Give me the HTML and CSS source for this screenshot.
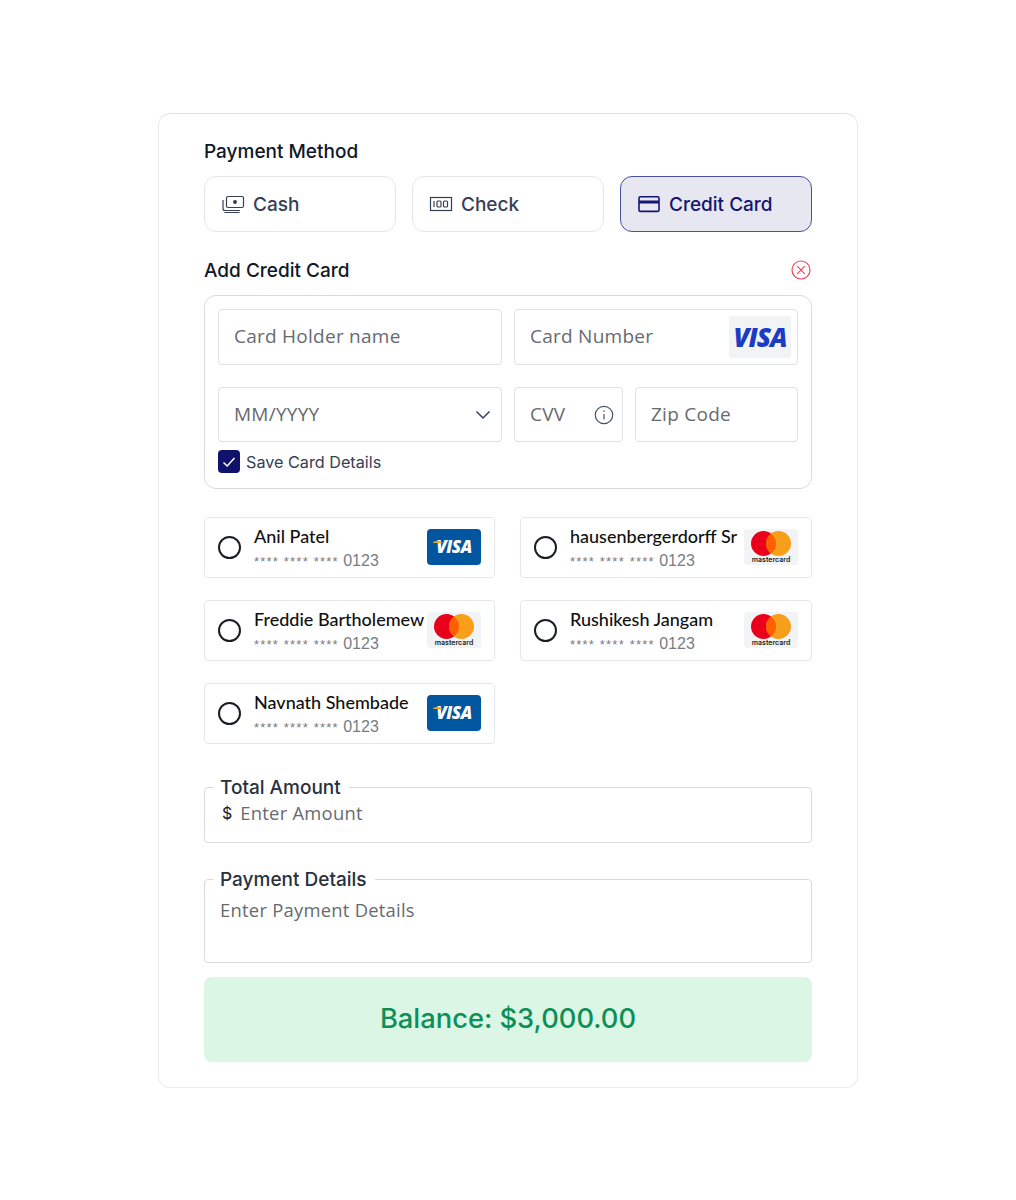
FILE: index.html
```html
<!DOCTYPE html>
<html lang="en">
<head>
    <meta charset="UTF-8">
    <meta name="viewport" content="width=device-width, initial-scale=1.0">
    <title>Payment Method</title>
    <link rel="stylesheet" href="styles.css">
</head>
<body>
    <main class="panel">
        <h2 class="title">Payment Method</h2>
        <div class="methods">
            <button type="button" class="method">
                <svg width="24" height="24" viewBox="0 0 24 24" fill="none" stroke="currentColor" stroke-width="1.2">
                    <rect x="5.5" y="4.5" width="17" height="11" rx="1.5"/>
                    <circle cx="14" cy="10" r="2" fill="currentColor" stroke="none"/>
                    <path d="M2 8v8.5a2 2 0 0 0 2 2h15"/>
                    <path d="M3.5 20.5h15" stroke-width="1"/>
                </svg>
                Cash
            </button>
            <button type="button" class="method">
                <svg width="24" height="24" viewBox="0 0 24 24" fill="none" stroke="currentColor" stroke-width="1.2">
                    <rect x="1.5" y="5.5" width="21" height="13"/>
                    <path d="M5 9v6"/>
                    <rect x="8" y="9" width="4" height="6" rx="1"/>
                    <rect x="14.5" y="9" width="4" height="6" rx="1"/>
                </svg>
                Check
            </button>
            <button type="button" class="method active">
                <svg width="24" height="24" viewBox="0 0 24 24" fill="none" stroke="currentColor" stroke-width="1.6">
                    <rect x="2" y="4.8" width="20" height="14.6" rx="1.5"/>
                    <path d="M2 10h20" stroke-width="3"/>
                </svg>
                Credit Card
            </button>
        </div>

        <div class="add-head">
            <h2 class="title">Add Credit Card</h2>
            <svg class="close-icon" width="20" height="20" viewBox="0 0 20 20" fill="none" stroke="#f0455a" stroke-width="1.2">
                <circle cx="10" cy="10" r="9"/>
                <path d="M6.2 6.2l7.6 7.6M13.8 6.2l-7.6 7.6"/>
            </svg>
        </div>

        <!-- New card form -->
        <form class="card-form">
            <div class="row-top">
                <div class="field"><input type="text" placeholder="Card Holder name"></div>
                <div class="field">
                    <input type="text" placeholder="Card Number">
                    <span class="visa-light">VISA</span>
                </div>
            </div>
            <div class="row-bottom">
                <div class="field">
                    <input type="text" placeholder="MM/YYYY">
                    <svg class="chevron" width="16" height="10" viewBox="0 0 16 10" fill="none" stroke="#344054" stroke-width="1.5">
                        <path d="M1.5 1.5L8 8l6.500-6.500"/>
                    </svg>
                </div>
                <div class="field">
                    <input type="text" placeholder="CVV">
                    <svg class="info" width="20" height="20" viewBox="0 0 20 20" fill="none" stroke="#475467" stroke-width="1.200">
                        <circle cx="10" cy="10" r="8.700"/>
                        <path d="M10 9v5.500M10 5.500v1.400"/>
                    </svg>
                </div>
                <div class="field"><input type="text" placeholder="Zip Code"></div>
            </div>
            <label class="save">
                <span class="check">
                    <svg width="14" height="12" viewBox="0 0 14 12" fill="none" stroke="#fff" stroke-width="1.500">
                        <path d="M1.500 6.500L5.200 10l7.300-8"/>
                    </svg>
                </span>
                Save Card Details
            </label>
        </form>

        <!-- Saved cards -->
        <div class="saved">
            <div class="saved-card">
                <span class="radio"></span>
                <div class="saved-info">
                    <div class="saved-name">Anil Patel</div>
                    <div class="saved-num"><span>**** **** ****</span> 0123</div>
                </div>
                <span class="logo visa"><i></i>VISA</span>
            </div>
            <div class="saved-card">
                <span class="radio"></span>
                <div class="saved-info">
                    <div class="saved-name">hausenbergerdorff Sr</div>
                    <div class="saved-num"><span>**** **** ****</span> 0123</div>
                </div>
                <span class="logo master"><b class="red"></b><b class="orange"></b><em>mastercard</em></span>
            </div>
            <div class="saved-card">
                <span class="radio"></span>
                <div class="saved-info">
                    <div class="saved-name">Freddie Bartholemew</div>
                    <div class="saved-num"><span>**** **** ****</span> 0123</div>
                </div>
                <span class="logo master"><b class="red"></b><b class="orange"></b><em>mastercard</em></span>
            </div>
            <div class="saved-card">
                <span class="radio"></span>
                <div class="saved-info">
                    <div class="saved-name">Rushikesh Jangam</div>
                    <div class="saved-num"><span>**** **** ****</span> 0123</div>
                </div>
                <span class="logo master"><b class="red"></b><b class="orange"></b><em>mastercard</em></span>
            </div>
            <div class="saved-card">
                <span class="radio"></span>
                <div class="saved-info">
                    <div class="saved-name">Navnath Shembade</div>
                    <div class="saved-num"><span>**** **** ****</span> 0123</div>
                </div>
                <span class="logo visa"><i></i>VISA</span>
            </div>
        </div>

        <fieldset class="amount">
            <legend>Total Amount</legend>
            <span class="dollar">$</span>
            <input type="text" placeholder="Enter Amount">
        </fieldset>

        <fieldset class="details">
            <legend>Payment Details</legend>
            <textarea placeholder="Enter Payment Details"></textarea>
        </fieldset>

        <div class="balance">Balance: $3,000.00</div>
    </main>
</body>
</html>
```

FILE: styles.css
```css
* {
    box-sizing: border-box;
}

body {
    margin: 0;
    background-color: #ffffff;
    font-family: "Inter", "Liberation Sans", sans-serif;
    color: #101828;
}

.panel {
    width: 700px;
    height: 975px;
    margin: 113px auto 0;
    padding: 26px 45px 0;
    border: 1px solid #eaecf0;
    border-top-color: #dcdfe3;
    border-radius: 12px;
}

.title {
    margin: 0;
    font-size: 19px;
    line-height: 24px;
    font-weight: 500;
    color: #101828;
}

/* Payment method buttons */
.methods {
    display: flex;
    gap: 16px;
    margin-top: 12px;
}

.method {
    flex: 1;
    height: 56px;
    display: flex;
    align-items: center;
    gap: 8px;
    padding: 0 16px;
    background-color: #ffffff;
    border: 1px solid #e4e7ec;
    border-radius: 12px;
    font-family: inherit;
    font-size: 19px;
    font-weight: 500;
    color: #344054;
}

.method svg {
    flex-shrink: 0;
}

.method.active {
    background-color: #e7e7f1;
    border-color: #4c4e9e;
    color: #14166f;
}

.add-head {
    display: flex;
    justify-content: space-between;
    align-items: center;
    height: 24px;
    margin-top: 27px;
}

.close-icon {
    margin: 0 1px 2px 0;
}

/* New card form */
.card-form {
    height: 194px;
    margin-top: 12px;
    padding: 13px;
    border: 1px solid #d8dbe0;
    border-radius: 12px;
}

.row-top,
.row-bottom {
    display: grid;
    gap: 12px;
}

.row-top {
    grid-template-columns: repeat(2, minmax(0, 1fr));
}

.row-bottom {
    grid-template-columns: 284px 109px minmax(0, 1fr);
    margin-top: 22px;
}

.field {
    height: 56px;
    display: flex;
    align-items: center;
    padding: 0 6px 0 15px;
    border: 1px solid #dfe1e5;
    border-radius: 4px;
}

.row-bottom .field {
    height: 55px;
}

.field input {
    flex: 1;
    min-width: 0;
    border: none;
    outline: none;
    padding: 0 0 2px;
    background: none;
    font-family: "Open Sans", sans-serif;
    font-size: 19px;
    letter-spacing: 0.25px;
}

input::placeholder,
textarea::placeholder {
    color: #666a70;
    opacity: 1;
}

.visa-light {
    width: 62px;
    height: 42px;
    flex-shrink: 0;
    display: flex;
    align-items: center;
    justify-content: center;
    background-color: #f2f3f4;
    border-radius: 4px;
    font-family: "Open Sans", sans-serif;
    font-size: 26px;
    font-style: italic;
    font-weight: 800;
    letter-spacing: -1px;
    color: #1a3cc4;
}

.chevron {
    margin-right: 4px;
}

.info {
    margin-right: 2px;
    flex-shrink: 0;
}

.save {
    display: flex;
    align-items: center;
    gap: 6px;
    margin-top: 8px;
    font-size: 16.2px;
    color: #344054;
}

.check {
    width: 22px;
    height: 23px;
    display: flex;
    align-items: center;
    justify-content: center;
    background-color: #10126b;
    border-radius: 4px;
}

/* Saved cards */
.saved {
    display: grid;
    grid-template-columns: 291px 292px;
    grid-auto-rows: 61px;
    column-gap: 25px;
    row-gap: 22px;
    margin-top: 28px;
}

.saved-card {
    display: flex;
    align-items: center;
    padding: 0 13px;
    border: 1px solid #e4e7ec;
    border-radius: 4px;
}

.radio {
    width: 23px;
    height: 23px;
    flex-shrink: 0;
    border: 2px solid #1a1d24;
    border-radius: 50%;
    margin-right: 13px;
}

.saved-info {
    flex: 1;
    min-width: 0;
    padding-top: 2px;
    white-space: nowrap;
}

.saved-name {
    font-family: "Lato", sans-serif;
    font-size: 18px;
    line-height: 24px;
    font-weight: 500;
    color: #101010;
}

.saved-num {
    margin-top: 2px;
    font-family: "Liberation Sans", sans-serif;
    font-size: 16px;
    line-height: 22px;
    color: #777c85;
}

.saved-num span {
    font-size: 13px;
    letter-spacing: 1.2px;
}

.logo {
    position: relative;
    width: 54px;
    height: 36px;
    flex-shrink: 0;
    margin-bottom: 2px;
    border-radius: 4px;
}

.visa {
    display: flex;
    align-items: center;
    justify-content: center;
    background-color: #02569f;
    font-family: "Open Sans", sans-serif;
    font-size: 17px;
    font-style: italic;
    font-weight: 800;
    letter-spacing: -0.5px;
    color: #ffffff;
}

.visa i {
    position: absolute;
    left: 6px;
    top: 12px;
    width: 9px;
    height: 4px;
    border-top: 2px solid #f4a51c;
    border-radius: 50% 50% 0 0;
}

.master {
    background-color: #f2f3f4;
}

.master b {
    position: absolute;
    top: 2px;
    width: 25px;
    height: 25px;
    border-radius: 50%;
}

.master .red {
    left: 7px;
    background-color: #eb001b;
}

.master .orange {
    left: 22px;
    background-color: #f79e1b;
}

.master .orange::before {
    content: "";
    position: absolute;
    left: -15px;
    top: 0;
    width: 25px;
    height: 25px;
    border-radius: 50%;
    background: radial-gradient(circle at 27.500px 12.500px, #ff5f00 0, #ff5f00 12.500px, transparent 12.500px);
}

.master em {
    position: absolute;
    left: 0;
    right: 0;
    bottom: 1px;
    text-align: center;
    font-family: "Inter", sans-serif;
    font-size: 7px;
    line-height: 8px;
    font-style: normal;
    font-weight: 600;
    color: #231f20;
}

/* Amount and details */
fieldset {
    margin: 0;
    padding: 0 15px;
    border: 1px solid #d8dbe0;
    border-radius: 4px;
}

legend {
    padding: 0 8px 0 6px;
    margin-left: -6px;
    font-size: 19px;
    line-height: 23px;
    font-weight: 500;
    color: #27303f;
}

.amount {
    height: 67px;
    margin-top: 32px;
    padding-bottom: 16px;
    display: flex;
    align-items: center;
}

.dollar {
    margin: 0 8px 0 2px;
    font-size: 16px;
    color: #101828;
}

.amount input,
.details textarea {
    border: none;
    outline: none;
    padding: 0;
    background: none;
    font-family: "Open Sans", sans-serif;
    font-size: 18.4px;
    letter-spacing: 0.25px;
}

.amount input {
    flex: 1;
}

.details {
    height: 95px;
    margin-top: 25px;
}

.details textarea {
    display: block;
    width: 100%;
    height: 40px;
    margin-top: 6px;
    resize: none;
}

.balance {
    height: 85px;
    margin-top: 14px;
    padding-bottom: 2px;
    display: flex;
    align-items: center;
    justify-content: center;
    background-color: #dcf6e6;
    border-radius: 8px;
    font-size: 27.3px;
    font-weight: 500;
    color: #0d8f58;
}
```
